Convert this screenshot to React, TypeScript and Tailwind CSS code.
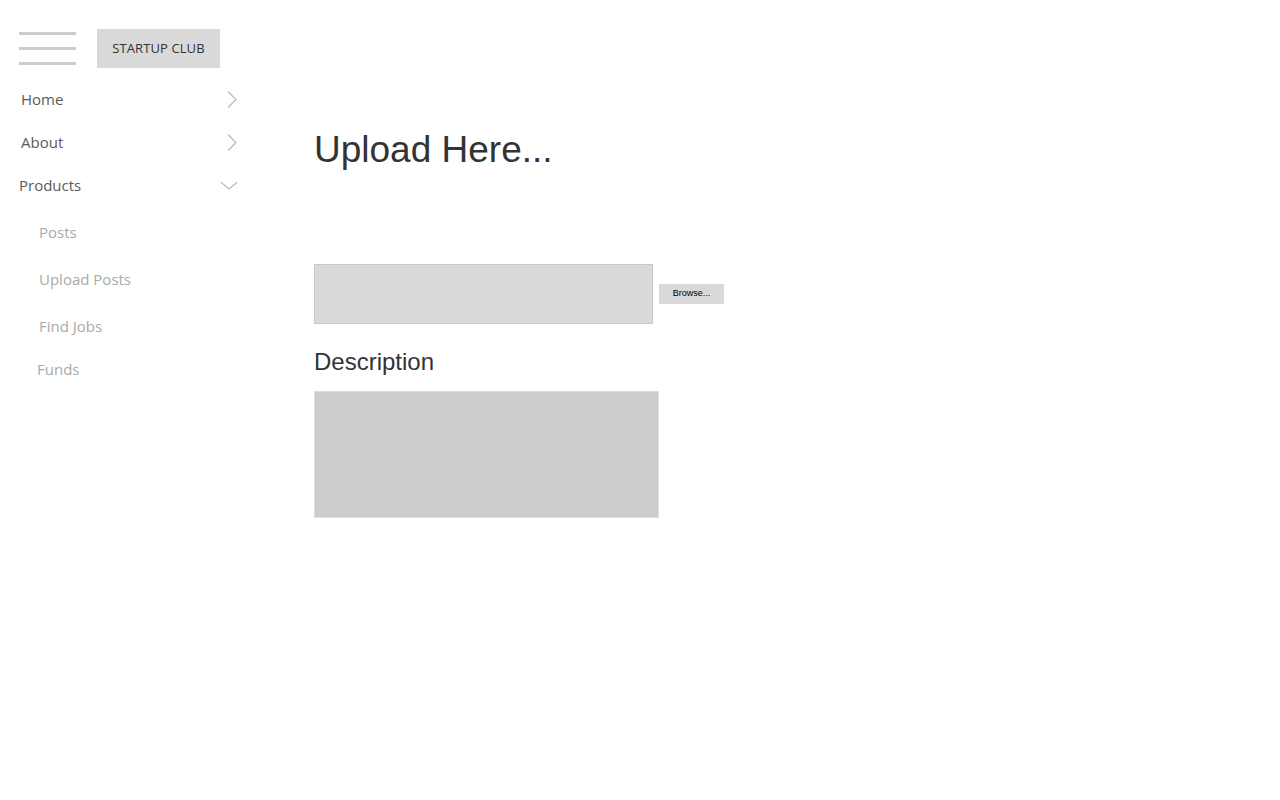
import React from 'react';

const ChevronRight: React.FC = () => (
  <svg width="10" height="17" viewBox="0 0 10 17" fill="none">
    <path d="M1 0.5 L9 8.5 L1 16.5" stroke="#b5b5b5" strokeWidth="1.1" />
  </svg>
);

const ChevronDown: React.FC = () => (
  <svg width="18" height="9" viewBox="0 0 18 9" fill="none">
    <path d="M0.5 0.8 L9 8 L17.5 0.8" stroke="#b5b5b5" strokeWidth="1.1" />
  </svg>
);

const subItems = [
  { label: 'Posts', h: 'h-[47px]', pl: 'pl-[39px]' },
  { label: 'Upload Posts', h: 'h-[47px]', pl: 'pl-[39px]' },
  { label: 'Find Jobs', h: 'h-[47px]', pl: 'pl-[39px]' },
  { label: 'Funds', h: 'h-[38px]', pl: 'pl-[37px]' },
];

const App: React.FC = () => {
  return (
    <div className="flex min-h-screen w-full bg-white font-['Open_Sans',sans-serif]">
      {/* sidebar */}
      <aside className="w-[250px] shrink-0 pt-[29px]">
        <div className="flex items-center pl-[19px]">
          <div className="flex w-[57px] flex-col gap-[12px]">
            <span className="block h-[3px] bg-[#cccccc]" />
            <span className="block h-[3px] bg-[#cccccc]" />
            <span className="block h-[3px] bg-[#cccccc]" />
          </div>
          <div className="ml-[21px] flex h-[39px] w-[123px] items-center justify-center bg-[#d9d9d9] pt-px text-[13px] tracking-[0.1px] text-[#333]">
            STARTUP CLUB
          </div>
        </div>

        <nav className="mt-[10px] w-[240px] text-[15px]">
          <div className="flex h-[43px] items-center justify-between pl-[21px] pr-[3px] text-[#5a5a5a]">
            <span>Home</span>
            <ChevronRight />
          </div>
          <div className="flex h-[43px] items-center justify-between pl-[21px] pr-[3px] text-[#5a5a5a]">
            <span>About</span>
            <ChevronRight />
          </div>
          <div className="flex h-[43px] items-center justify-between pl-[19px] pr-[2px] text-[#5a5a5a]">
            <span>Products</span>
            <ChevronDown />
          </div>
          <ul className="mt-[2px] text-[#aaaaaa]">
            {subItems.map((s) => (
              <li key={s.label} className={`flex items-center ${s.h} ${s.pl}`}>
                {s.label}
              </li>
            ))}
          </ul>
        </nav>
      </aside>

      {/* main */}
      <main className="flex-1 pl-[64px] pt-[131px] font-['Liberation_Sans',Arial,sans-serif]">
        <h1 className="text-[37px] leading-none text-[#333]">Upload Here...</h1>

        <div className="mt-[96px] flex items-center gap-[6px]">
          <div className="h-[60px] w-[339px] border border-[#c8c8c8] bg-[#d9d9d9]" />
          <button className="flex h-[20px] w-[65px] items-center justify-center bg-[#d9d9d9] text-[9px] text-black">
            Browse...
          </button>
        </div>

        <h2 className="mt-[26px] text-[24px] leading-none text-[#333]">Description</h2>

        <div className="mt-[17px] h-[127px] w-[345px] border border-[#dddddd] bg-[#cccccc]" />
      </main>
    </div>
  );
};

export default App;
